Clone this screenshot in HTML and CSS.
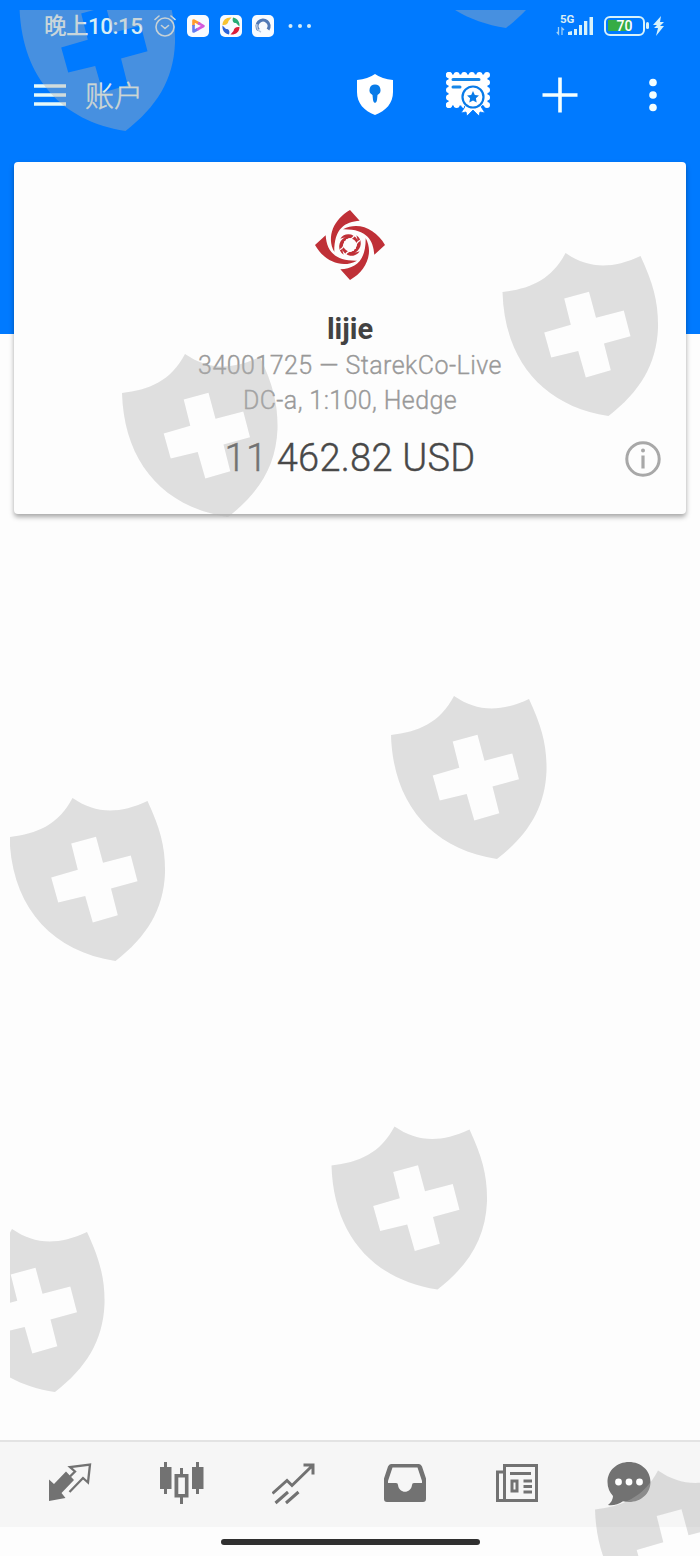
FILE: index.html
```
<!DOCTYPE html>
<html lang="zh-CN">
<head>
<meta charset="utf-8">
<title>账户</title>
<link rel="stylesheet" href="styles.css">
</head>
<body>
<div class="app">
  <div class="status">
    <span class="time">晚上10:15</span>
    <svg class="alarm" width="22" height="24" viewBox="0 0 22 24" fill="none" stroke="#d4e6ee" stroke-width="1.6" stroke-linecap="round"><circle cx="11" cy="13" r="9"/><path d="M7.500 11.500l3.500 3 3.500-3M1 5.500l4-3.500M21 5.500L17 2"/></svg>
    <svg class="chip" width="22" height="22" viewBox="0 0 22 22"><rect width="22" height="22" rx="5" fill="#f8fbff"/><path d="M6.500 11V5.500L13 9" fill="none" stroke="#ff9c2d" stroke-width="2.600" stroke-linejoin="round"/><path d="M6.500 10v6.500L11 14" fill="none" stroke="#657cf0" stroke-width="2.600" stroke-linejoin="round"/><path d="M10 14.700l6.500-3.700L11 7.800" fill="none" stroke="#d45adb" stroke-width="2.600" stroke-linejoin="round"/></svg>
    <svg class="chip" width="22" height="22" viewBox="0 0 22 22"><rect width="22" height="22" rx="5" fill="#f8fbff"/><path d="M2.500 10c0-5 4-8 9-7.500L8.500 6C8 9 6 10.500 2.500 10z" fill="#f7c331"/><path d="M13 2.500c5 1 7 5 6.500 9L16 8c-3 0-4-2-3-5.500z" fill="#27ab75"/><path d="M19.500 12c0 5-4 8-9 7.500l3-3.500c.5-3 2.500-4.500 6-4z" fill="#dc1e38"/><path d="M9 19.500c-5-1-7-5-6.500-9L6 14c3 0 4 2 3 5.500z" fill="#2b63d8"/></svg>
    <svg class="chip" width="22" height="22" viewBox="0 0 22 22"><rect width="22" height="22" rx="5" fill="#f8fbff"/><path d="M6.500 15a6 6 0 1 1 9.500-.500" fill="none" stroke="#5279b6" stroke-width="3.200"/><path d="M5 9a6.500 6.500 0 0 0 4 8" fill="none" stroke="#b9c6dc" stroke-width="1.600"/></svg>
    <svg class="more" width="24" height="6" viewBox="0 0 24 6" fill="#d5edf7"><circle cx="2.500" cy="3" r="2"/><circle cx="12" cy="3" r="2"/><circle cx="21" cy="3" r="2"/></svg>
    <div class="signal">
      <span class="net">5G</span>
      <svg width="38" height="20" viewBox="0 0 38 20" fill="#d8f2fa"><path d="M12 19v-3l4-1v4zM18 19v-6h3v6zM23 19V9h3v10zM28 19V5h3.300v14zM33.500 19V1H37v18z"/><path d="M2.500 11v7L.800 16M6 19v-7l2 2" fill="none" stroke="#9fd0f5" stroke-width="1.300"/></svg>
    </div>
    <div class="battery"><span>70</span></div>
    <svg class="bolt" width="12" height="20" viewBox="0 0 12 20" fill="#d8f2fa"><path d="M8 0L0 9h4L1 12h4L3 20 11 10H7l4-4H7z"/></svg>
  </div>

  <header class="bar">
    <svg class="menu" width="32" height="24" viewBox="0 0 32 24" fill="none" stroke="#e6f9f8" stroke-width="3.600"><path d="M0 3h32M0 12h32M0 21h32"/></svg>
    <h1>账户</h1>
    <svg class="lock" width="36" height="41" viewBox="0 0 36 41"><path d="M18 0Q25 5 36 6v12c0 11-7 19-18 23C7 37 0 29 0 18V6Q11 5 18 0z" fill="#fff"/><path d="M18 10.500a5.500 5.500 0 0 1 2.500 10.400L20 26q-.5 3-2 3t-2-3l-.5-5.100A5.500 5.500 0 0 1 18 10.500z" fill="#087be8"/></svg>
    <svg class="cert" width="44" height="44" viewBox="0 0 44 44">
      <path d="M2.500 2.500h39v31h-39z" fill="#fff"/>
      <path d="M3 3h38M3 33h38" fill="none" stroke="#fff" stroke-width="6" stroke-linecap="round" stroke-dasharray="0.010 7.598"/>
      <path d="M3 3v30M41 3v30" fill="none" stroke="#fff" stroke-width="6" stroke-linecap="round" stroke-dasharray="0.010 7.490"/>
      <path d="M7 7.500h26M7 15h7" stroke="#1687e8" stroke-width="3" stroke-linecap="round"/>
      <path d="M18 33h19v11H18z" fill="#007aff"/>
      <path d="M20 33l-5 8 5-1 1 4 6-6 6 6 1-4 5 1-5-8z" fill="#fff" stroke="#007aff" stroke-width=".8"/>
      <circle cx="27" cy="25" r="12.500" fill="#fff"/><circle cx="27" cy="25" r="10.500" fill="none" stroke="#087be8" stroke-width="2.200"/>
      <path d="M27 19l1.800 3.900 4.200.500-3.100 2.900.8 4.200-3.700-2.100-3.700 2.100.8-4.200-3.100-2.900 4.200-.500z" fill="#087be8"/>
    </svg>
    <svg class="plus" width="36" height="36" viewBox="0 0 36 36" stroke="#f4ffff" stroke-width="3.600"><path d="M18 .500v35M.500 18h35"/></svg>
    <svg class="dots" width="8" height="34" viewBox="0 0 8 34" fill="#f4ffff"><circle cx="4" cy="4.500" r="3.800"/><circle cx="4" cy="17" r="3.800"/><circle cx="4" cy="29.500" r="3.800"/></svg>
  </header>

  <main class="content">
    <section class="card">
      <svg class="logo" width="72" height="72" viewBox="-108 -108 216 216" fill="#bf3037">
        <defs><g id="blade"><path d="M0-105L29-73C-15-70-48-50-47 21C-72-25-48-78 0-105z"/><path d="M-29-19C-18-38 12-37 23-15C26-8 25-3 22 2C20-16-2-29-29-19z"/></g></defs>
        <use href="#blade"/><use href="#blade" transform="rotate(90)"/><use href="#blade" transform="rotate(180)"/><use href="#blade" transform="rotate(270)"/>
        <path d="M-30 14Q-17 8-15-12M14-30Q8-17-12-15M30-14Q17-8 15 12M-14 30Q-8 17 12 15" fill="none" stroke="#fdfdfd" stroke-width="4"/>
      </svg>
      <div class="name">lijie</div>
      <div class="detail server">34001725 — StarekCo-Live</div>
      <div class="detail plan">DC-a, 1:100, Hedge</div>
      <div class="balance-row">
        <span class="balance">11 462.82 USD</span>
        <svg class="info" width="36" height="36" viewBox="0 0 36 36"><circle cx="18" cy="18" r="16.200" fill="none" stroke="#a8a8a8" stroke-width="3"/><path d="M18 14.500v13" stroke="#a8a8a8" stroke-width="3.200"/><circle cx="18" cy="9.500" r="2" fill="#a8a8a8"/></svg>
      </div>
    </section>
  </main>

  <nav class="tabs">
    <svg width="44" height="44" viewBox="0 0 44 44"><path d="M1 16.500L6 21 18 8.500 26 17 13.500 30l4 5L1 38z" transform="translate(0 1)" fill="#727272"/><path d="M22 14.500l5-5-5-4.500L42 2.500l-2 18-5-4.500-13.500 14" fill="none" stroke="#727272" stroke-width="2.300"/></svg>
    <svg width="44" height="44" viewBox="0 0 44 44" fill="#727272"><path d="M4 0h3v5h4.500v22H7v5H4v-5H0V5h4zM36 0h3v5h4.500v22H39v5h-3v-5h-4V5h4z"/><path d="M20 6h3v6h5.500v23.500H23V42h-3v-6.500h-5.500V12H20zM18.300 15.500V32h6.600V15.500z" fill-rule="evenodd"/></svg>
    <svg width="44" height="44" viewBox="0 0 44 44" fill="none" stroke="#727272" stroke-width="3"><path d="M.5 31.500l14.500-13 5 5L40 4M31.500 3H41V12.500M3.500 41L16 30M14 41l12.500-11"/></svg>
    <svg width="44" height="44" viewBox="0 0 44 44"><path d="M8 2h28q2 0 3 2.500l4 12V37q0 3-3 3H4q-3 0-3-3V16.500l4-12Q6 2 8 2zm1.500 3.500L5 19v2h8q2 0 2 2c1 9 13 9 14 0q0-2 2-2h8v-2L34.500 5.500z" fill="#727272" fill-rule="evenodd"/></svg>
    <svg width="44" height="44" viewBox="0 0 44 44" fill="none" stroke="#727272" stroke-width="3"><path d="M9.500 3.500h32v35h-32zM8 10H2.500v28.500H11M15 11.500h21M28.500 19H37M28.500 24.500H37M28.500 30H37"/><path d="M17 19h5v10h-5z"/></svg>
    <svg width="44" height="44" viewBox="0 0 44 44"><path d="M22 0c12 0 21.500 8.500 21.500 20S34 40 22 40q-3 0-6-.800Q9 44 1 43q5-4 5-9Q.5 28 .5 20C.5 8.500 10 0 22 0z" fill="#727272"/><circle cx="11.500" cy="20" r="3.400" fill="#fff"/><circle cx="22" cy="20" r="3.400" fill="#fff"/><circle cx="32.500" cy="20" r="3.400" fill="#fff"/></svg>
  </nav>
  <div class="home"><span></span></div>

  <svg class="watermark" viewBox="10 10 690 1546" width="690" height="1546">
    <defs><path id="shield" fill-rule="evenodd" d="M0 39C27 36 49 27 63 0C85 15 108 17 138 3C151 31 156 50 155.500 75C154 112 137 139 106 163C41 153 2 108 0 39zM61.700 45.500L86.500 38.700 93.500 64.700 121.300 57.500 128 83.300 101.500 90.500 108.300 117.300 83.300 124.500 75.700 98 48.700 104.500 41.700 79.500 68.300 71.700z"/></defs>
    <use href="#shield" x="19.500" y="-32"/><use href="#shield" x="400" y="-135"/>
    <use href="#shield" x="502.500" y="253"/><use href="#shield" x="122" y="354"/>
    <use href="#shield" x="391" y="696"/><use href="#shield" x="9.500" y="798"/>
    <use href="#shield" x="331.500" y="1126.500"/><use href="#shield" x="-51" y="1229"/>
    <use href="#shield" x="595" y="1470.500"/>
  </svg>
</div>
</body>
</html>
```
FILE: styles.css
```
* { box-sizing: border-box; }
body { margin: 0; font-family: Roboto, "Noto Sans CJK SC", sans-serif; }
svg { display: block; flex: none; }

.app {
  position: relative;
  display: flex;
  flex-direction: column;
  width: 700px;
  height: 1556px;
  overflow: hidden;
  background: linear-gradient(#007aff 334px, #fdfdfd 334px);
}

.status {
  display: flex;
  align-items: center;
  height: 52px;
  padding: 0 35px 0 44px;
  color: #d9edf5;
}
.time { width: 110px; font-size: 22.5px; font-weight: 500; line-height: 30px; letter-spacing: -.5px; white-space: nowrap; }
.alarm { margin-right: 11px; }
.chip { margin-right: 10.5px; }
.more { margin-left: 3px; }
.signal { position: relative; width: 38px; margin: 0 10px 0 auto; }
.net { position: absolute; left: 4px; top: -3px; font-size: 11.5px; line-height: 12px; font-weight: 700; }
.battery {
  position: relative;
  width: 41px;
  height: 20px;
  margin-right: 8px;
  border: 2.5px solid #d8f2fa;
  border-radius: 6px;
  background: linear-gradient(90deg, #35ac45 23px, transparent 23px) 2px 2px / 31px 11px no-repeat;
  color: #fff;
  font-size: 14px;
  font-weight: 500;
  line-height: 16px;
  text-align: center;
}
.battery::after { content: ""; position: absolute; right: -6px; top: 4px; width: 3px; height: 7px; border-radius: 2px; background: #d8f2fa; }

.bar { display: flex; align-items: center; height: 86px; padding: 0 43px 0 34px; }
.bar h1 { width: 291px; margin: 0; padding: 4px 0 0 19px; color: #e2efe9; font-size: 29px; line-height: 40px; font-weight: 300; -webkit-text-stroke: .4px #e2efe9; }
.lock { margin-top: -2px; }
.cert { margin-left: 53px; margin-top: -2px; }
.plus { margin-left: 52px; }
.dots { margin-left: auto; }

.content { flex: 1; padding: 24px 14px 0; }
.card {
  display: flex;
  flex-direction: column;
  align-items: center;
  height: 352px;
  padding-top: 47px;
  border-radius: 4px;
  background: #fdfdfd;
  box-shadow: 0 3px 5px rgba(0, 0, 0, .34);
}
.name { margin-top: 30px; color: #424242; font-size: 29px; line-height: 36px; font-weight: 700; }
.detail { color: #999; font-size: 25px; line-height: 35px; font-weight: 300; -webkit-text-stroke: .35px #999; }
.server { padding-top: 1px; letter-spacing: .45px; }
.plan { letter-spacing: .4px; }
.balance-row { display: grid; grid-template-columns: 1fr auto 1fr; align-items: center; width: 100%; height: 54px; padding: 0 25px; margin-top: 14px; }
.balance { grid-column: 2; padding-bottom: 3px; color: #484848; font-size: 38px; line-height: 46px; font-weight: 300; letter-spacing: .25px; -webkit-text-stroke: .4px #484848; white-space: nowrap; }
.info { justify-self: end; }

.tabs {
  display: flex;
  justify-content: space-between;
  height: 87px;
  padding: 20px 49px 0 48px;
  border-top: 2px solid #e3e3e3;
  background: #f6f6f6;
}
.home { display: flex; justify-content: center; height: 29px; padding-top: 12px; background: #fdfdfd; }
.home span { width: 259px; height: 6px; border-radius: 3px; background: #303030; }

.watermark { position: absolute; left: 10px; top: 10px; overflow: hidden; fill: #b2b2b2; fill-opacity: .4; pointer-events: none; }
```
